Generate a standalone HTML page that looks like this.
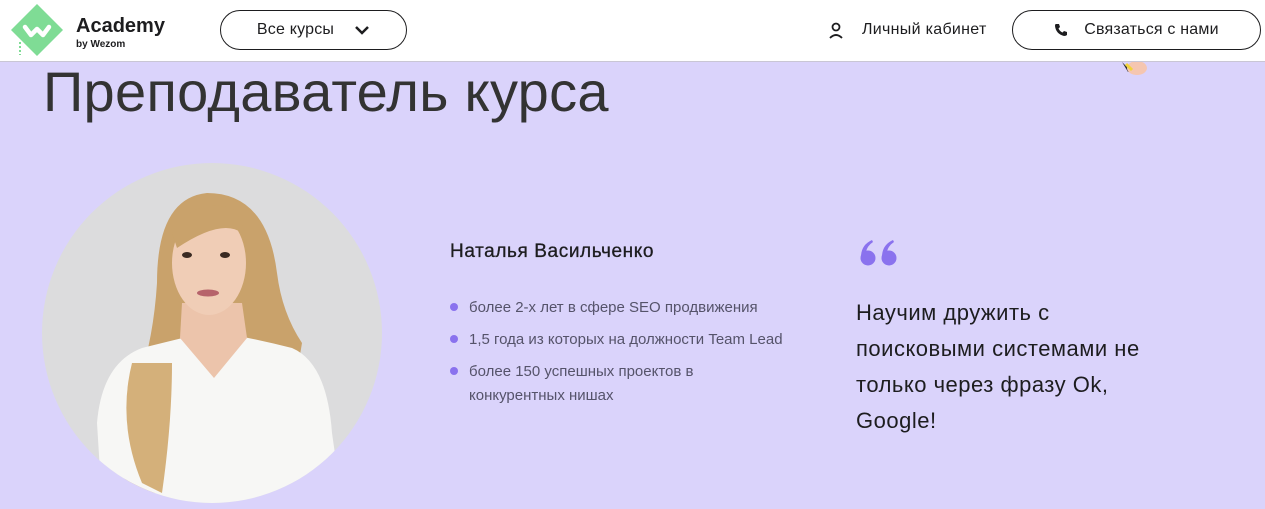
<!DOCTYPE html>
<html><head><meta charset="utf-8"><style>
*{margin:0;padding:0;box-sizing:border-box}
body{width:1265px;height:509px;overflow:hidden;background:#dad3fb;font-family:"Liberation Sans",sans-serif;position:relative;color:#1d1d1f}
.hdr{position:absolute;left:0;top:0;width:1265px;height:62px;background:#fff;border-bottom:1px solid #c9c6d4}
.btn{position:absolute;border:1.5px solid #1d1d1f;border-radius:20px;height:40px;font-size:16px;display:flex;align-items:center;justify-content:center;letter-spacing:0.2px}
h1{position:absolute;left:43px;top:59px;font-size:56px;font-weight:400;color:#333;letter-spacing:0.3px}
.name{position:absolute;left:450px;top:241px;font-size:19px;color:#1d1d1f;letter-spacing:0.6px;-webkit-text-stroke:0.3px #1d1d1f}
ul{position:absolute;left:450px;top:296px;list-style:none;font-size:15px;color:#55536a;width:380px}
ul li{position:relative;padding-left:19px;line-height:24px;margin-bottom:8px}
ul li:before{content:"";position:absolute;left:0;top:7px;width:8px;height:8px;border-radius:50%;background:#8a72ee}
.q{position:absolute;left:856px;top:295px;font-size:22px;line-height:36px;width:340px;color:#1d1d1f;letter-spacing:0.5px}
</style></head><body>
<div class="hdr">
<svg style="position:absolute;left:8px;top:3px" width="58" height="56" viewBox="0 0 58 56">
<polygon points="29,1 55,27 29,53 3,27" fill="#7fdc95"/>
<path d="M17 24 L23 32 L29 26 L35 32 L41 24" stroke="#fff" stroke-width="4.5" fill="none" stroke-linecap="round" stroke-linejoin="round"/>
<line x1="12" y1="39" x2="12" y2="52" stroke="#7fdc95" stroke-width="2" stroke-dasharray="2 2"/>
</svg>
<div style="position:absolute;left:76px;top:15px;font-size:20px;font-weight:700">Academy</div>
<div style="position:absolute;left:76px;top:39px;font-size:10px;font-weight:700">by Wezom</div>
<div class="btn" style="left:220px;top:10px;width:187px">Все курсы<svg style="margin-left:20px" width="16" height="10" viewBox="0 0 16 10"><path d="M2 2 L8 8 L14 2" stroke="#1d1d1f" stroke-width="2.5" fill="none"/></svg></div>
<svg style="position:absolute;left:828px;top:22px" width="16" height="18" viewBox="0 0 16 18"><circle cx="8" cy="5" r="3.5" stroke="#1d1d1f" stroke-width="1.8" fill="none"/><path d="M2 16 Q8 10 14 16" stroke="#1d1d1f" stroke-width="1.8" fill="none"/></svg>
<div style="position:absolute;left:862px;top:21px;font-size:16px;letter-spacing:0.3px">Личный кабинет</div>
<div class="btn" style="left:1012px;top:10px;width:249px"><svg style="margin-right:16px" width="14" height="14" viewBox="0 0 14 14"><path d="M2 1 L5 1 L6 4 L4.5 5.5 Q6 8.5 8.5 9.5 L10 8 L13 9 L13 12 Q12 13 10 13 Q2 11 1 3 Q1 1 2 1Z" fill="#1d1d1f"/></svg>Связаться с нами</div>
</div>
<svg style="position:absolute;left:1120px;top:62px" width="30" height="14"><path d="M2 0 L10 8 L8 10 Z" fill="#333"/><ellipse cx="17" cy="6" rx="10" ry="7" fill="#f5c6b0"/><path d="M6 2 L12 8" stroke="#f2d43a" stroke-width="3"/></svg>
<h1>Преподаватель курса</h1>
<svg style="position:absolute;left:42px;top:163px" width="340" height="340" viewBox="0 0 340 340">
<defs><clipPath id="c"><circle cx="170" cy="170" r="170"/></clipPath></defs>
<g clip-path="url(#c)">
<rect width="340" height="340" fill="#dcdcdd"/>
<path d="M165 30 Q115 35 115 120 Q110 200 80 260 Q70 300 90 330 L130 330 Q140 260 140 190 L200 190 Q210 260 240 300 L260 180 Q240 150 235 110 Q225 30 165 30Z" fill="#c9a26b"/>
<path d="M55 260 Q60 200 100 185 Q140 175 170 168 Q210 175 250 185 Q285 200 290 270 L300 340 L60 340Z" fill="#f7f7f5"/>
<path d="M90 200 Q75 260 100 320 L120 330 Q130 260 130 200Z" fill="#d4b07a"/>
<path d="M140 140 L200 140 L205 175 L172 215 L138 175Z" fill="#ecc4ab"/>
<ellipse cx="167" cy="100" rx="37" ry="52" fill="#f0cdb6"/>
<path d="M130 70 Q150 35 190 45 Q205 60 205 90 L200 70 Q180 55 135 85Z" fill="#c9a26b"/>
<ellipse cx="145" cy="92" rx="5" ry="3" fill="#3a2a22"/><ellipse cx="183" cy="92" rx="5" ry="3" fill="#3a2a22"/>
<ellipse cx="166" cy="130" rx="11" ry="3.5" fill="#b6636b"/>
</g></svg>
<div class="name">Наталья Васильченко</div>
<ul>
<li>более 2-х лет в сфере SEO продвижения</li>
<li>1,5 года из которых на должности Team Lead</li>
<li>более 150 успешных проектов в<br>конкурентных нишах</li>
</ul>
<svg style="position:absolute;left:860px;top:239px" width="40" height="28" viewBox="0 0 40 28">
<circle cx="8" cy="19" r="7.5" fill="#8a72ee"/><path d="M1 18 Q1 6 12 1 L13 3 Q7 7 6 13Z" fill="#8a72ee"/>
<circle cx="29" cy="19" r="7.5" fill="#8a72ee"/><path d="M22 18 Q22 6 33 1 L34 3 Q28 7 27 13Z" fill="#8a72ee"/>
</svg>
<div class="q">Научим дружить с<br>поисковыми системами не<br>только через фразу Ok,<br>Google!</div>
</body></html>
